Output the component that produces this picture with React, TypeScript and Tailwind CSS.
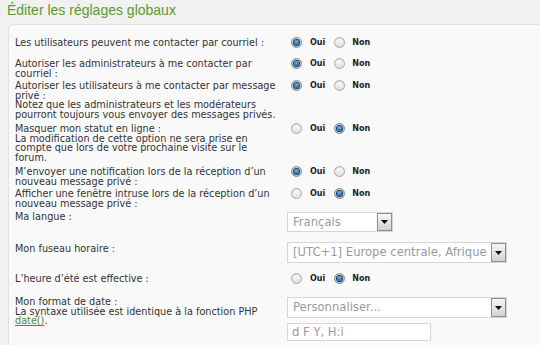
import type { ReactNode } from "react"

const Radio = ({ checked }: { checked?: boolean }) => (
    <span
        className={
            "flex h-[11px] w-[11px] shrink-0 items-center justify-center rounded-full border bg-gradient-to-b shadow-[inset_0_1px_1px_rgba(0,0,0,0.15)] " +
            (checked ? "border-[#7d8791] from-[#e9edf1] to-[#b9c2ca]" : "border-[#a9a9a9] from-[#ffffff] to-[#dedede]")
        }
    >
        {checked && <span className="h-[5px] w-[5px] rounded-full bg-[radial-gradient(circle_at_50%_35%,#7db6e6,#1c5c98_75%)] shadow-[0_0_0_1px_#133f6a]" />}
    </span>
)

const OuiNon = ({ oui }: { oui: boolean }) => (
    <div className="-mt-[1px] ml-[4px] flex items-center text-[8px] font-bold leading-[11px] text-[#222]">
        <Radio checked={oui} />
        <span className="ml-[8px]">Oui</span>
        <span className="ml-[9px]"><Radio checked={!oui} /></span>
        <span className="ml-[7px]">Non</span>
    </div>
)

const Select = ({ value, w, h }: { value: string; w: string; h: string }) => (
    <div className={`flex items-center justify-between overflow-hidden border border-[#d6d6d6] bg-white ${w} ${h}`}>
        <span className="min-w-0 flex-1 overflow-hidden whitespace-nowrap pl-[5px] text-[11.6px] leading-[15px] text-[#9a9a9a]">{value}</span>
        <span className="flex h-full w-[15px] shrink-0 items-center justify-center border border-[#8e8e8e] bg-gradient-to-b from-[#f7f7f7] to-[#d2d2d2]">
            <svg width="7" height="4" viewBox="0 0 7 4">
                <polygon points="0,0 7,0 3.5,4" fill="#111" />
            </svg>
        </span>
    </div>
)

const Row = ({ h, label, children, pt }: { h: string; label: ReactNode; children?: ReactNode; pt?: string }) => (
    <div className={`flex ${h}`}>
        <div className={`w-[272px] shrink-0 pr-[8px] ${pt ?? ""}`}>{label}</div>
        <div className="flex-1">{children}</div>
    </div>
)

export default function App() {
    return (
        <div className="h-[345px] w-[540px] overflow-hidden bg-[#f1f1f1]">
            <h2 className="pl-[7px] pt-[3px] font-['Liberation_Sans',Arial,sans-serif] text-[14px] leading-[14px] text-[#5a9a30]">
                Éditer les réglages globaux
            </h2>
            <div className="ml-[8px] mt-[7px] h-[340px] w-[560px] rounded-[5px] border border-[#e1e1e1] bg-[#f9f9f9] pl-[6px] pt-[13px] font-['DejaVu_Sans',Verdana,sans-serif] text-[9.7px] leading-[9.5px] text-[#333]">
                <Row h="h-[21px]" label="Les utilisateurs peuvent me contacter par courriel :">
                    <OuiNon oui={true} />
                </Row>
                <Row h="h-[22px]" label="Autoriser les administrateurs à me contacter par courriel :">
                    <OuiNon oui={true} />
                </Row>
                <Row
                    h="h-[43px]"
                    label={
                        <>
                            Autoriser les utilisateurs à me contacter par message privé :
                            <br />
                            Notez que les administrateurs et les modérateurs pourront toujours vous envoyer des messages privés.
                        </>
                    }
                >
                    <OuiNon oui={true} />
                </Row>
                <Row
                    h="h-[43px]"
                    label={
                        <>
                            Masquer mon statut en ligne :
                            <br />
                            La modification de cette option ne sera prise en compte que lors de votre prochaine visite sur le forum.
                        </>
                    }
                >
                    <OuiNon oui={false} />
                </Row>
                <Row h="h-[22px]" label="M’envoyer une notification lors de la réception d’un nouveau message privé :">
                    <OuiNon oui={true} />
                </Row>
                <Row h="h-[23px]" label="Afficher une fenêtre intruse lors de la réception d’un nouveau message privé :">
                    <OuiNon oui={false} />
                </Row>
                <Row h="h-[30px]" label="Ma langue :">
                    <Select value="Français" w="w-[106px]" h="h-[20px]" />
                </Row>
                <Row h="h-[32px]" pt="pt-[2px]" label="Mon fuseau horaire :">
                    <Select value="[UTC+1] Europe centrale, Afrique" w="w-[220px]" h="h-[21px]" />
                </Row>
                <Row h="h-[23px]" label="L’heure d’été est effective :">
                    <OuiNon oui={false} />
                </Row>
                <Row
                    h="h-[50px]"
                    label={
                        <>
                            Mon format de date :
                            <br />
                            La syntaxe utilisée est identique à la fonction PHP{" "}
                            <a className="text-[#4f8a2c] underline">date()</a>.
                        </>
                    }
                >
                    <div className="flex flex-col gap-[5px]">
                        <Select value="Personnaliser..." w="w-[220px]" h="h-[21px]" />
                        <div className="flex h-[18px] w-[144px] items-center border border-[#d6d6d6] bg-white pl-[4px] text-[11.6px] leading-[15px] text-[#9a9a9a]">
                            d F Y, H:i
                        </div>
                    </div>
                </Row>
            </div>
        </div>
    )
}
